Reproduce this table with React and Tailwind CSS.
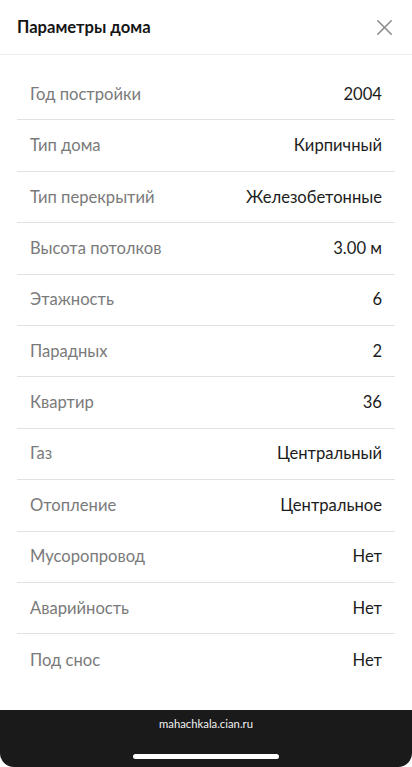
import { X } from "lucide-react";

const params = [
  ["Год постройки", "2004"],
  ["Тип дома", "Кирпичный"],
  ["Тип перекрытий", "Железобетонные"],
  ["Высота потолков", "3.00 м"],
  ["Этажность", "6"],
  ["Парадных", "2"],
  ["Квартир", "36"],
  ["Газ", "Центральный"],
  ["Отопление", "Центральное"],
  ["Мусоропровод", "Нет"],
  ["Аварийность", "Нет"],
  ["Под снос", "Нет"],
];

export default function App() {
  return (
    <div className="flex h-[767px] w-[412px] flex-col bg-white font-['Lato','Noto_Sans',sans-serif]">
      <header className="flex h-[55px] shrink-0 items-center justify-between border-b border-[#ececec] pl-[17px] pr-[14px]">
        <h1 className="text-[16.6px] font-bold text-[#151515]">Параметры дома</h1>
        <X size={27} strokeWidth={1.4} className="text-[#8c8c8c]" />
      </header>
      <ul className="flex-1 px-[17px] pt-[14px]">
        {params.map(([label, value], i) => (
          <li
            key={label}
            className={
              "flex h-[51.4px] items-center justify-between px-[13px] text-[16.6px] " +
              (i < params.length - 1 ? "border-b border-[#e2e2e2]" : "")
            }
          >
            <span className="text-[#7a7a7a]">{label}</span>
            <span className="text-[#1c1c1c]">{value}</span>
          </li>
        ))}
      </ul>
      <footer className="flex h-[57px] shrink-0 flex-col items-center rounded-b-[14px] bg-[#1a1a1a] pt-[6px]">
        <span className="text-[11.3px] text-[#f2f2f2]">mahachkala.cian.ru</span>
        <div className="mt-auto mb-[8px] h-[5px] w-[146px] rounded-full bg-white" />
      </footer>
    </div>
  );
}
